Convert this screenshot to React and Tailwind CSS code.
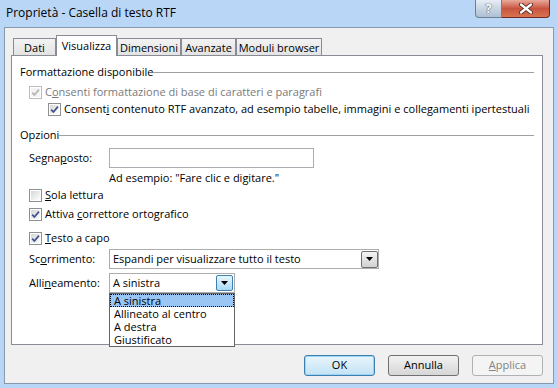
import React from "react";

function Check({ checked, disabled }) {
  return (
    <div
      className={
        disabled
          ? "w-[13px] h-[13px] border border-[#bcbcbc] bg-white p-px shrink-0"
          : "w-[13px] h-[13px] border border-[#8e8f8f] bg-white p-px shrink-0"
      }
    >
      <div
        className={
          disabled
            ? "w-full h-full bg-[#f4f4f4] flex items-center justify-center"
            : "w-full h-full bg-linear-to-br from-[#d6d6d6] to-[#ffffff] flex items-center justify-center"
        }
      >
        {checked && (
          <svg width="9" height="9" viewBox="0 0 9 9">
            <path
              d="M1.2 4.6 L3.4 7 L7.9 1.6"
              fill="none"
              stroke={disabled ? "#b5b5b5" : "#3f5190"}
              strokeWidth="1.7"
            />
          </svg>
        )}
      </div>
    </div>
  );
}

function Tri() {
  return (
    <svg width="7" height="4" viewBox="0 0 7 4">
      <path d="M0 0 H7 L3.5 4 Z" fill="#000" />
    </svg>
  );
}

function GroupHeader({ children, className }) {
  return (
    <div className={"h-[16px] flex items-center " + className}>
      <span className="leading-[16px]">{children}</span>
      <div className="flex-1 h-px bg-[#a0a0a0]" />
    </div>
  );
}

export default function App() {
  return (
    <div className="w-[557px] h-[388px] bg-[#bad6f6] overflow-hidden font-['Open_Sans',sans-serif] text-[11px] text-black">
      {/* Title bar */}
      <div className="h-[27px] flex items-start justify-between">
        <div className="pl-[6px] pt-[5px] text-[12px] leading-[16px] text-black">
          Proprietà - Casella di testo RTF
        </div>
        <div className="flex mr-[7px]">
          <div className="w-[27px] h-[18px] border border-t-0 border-[#6f7f94] rounded-bl-[4px] bg-linear-to-b from-[#e6edf5] via-[#c9d5e3] to-[#aebfd3] flex items-center justify-center">
            <span className="text-white font-bold text-[13px] leading-[13px] [text-shadow:0_0_1px_#34425a,0_0_1px_#34425a]">
              ?
            </span>
          </div>
          <div className="w-[48px] h-[18px] border border-t-0 border-l-0 border-[#6e2a22] rounded-br-[4px] bg-linear-to-b from-[#e9a99b] via-[#c75441] to-[#d9734f] flex items-center justify-center">
            <svg width="16" height="11" viewBox="0 0 16 11">
              <path
                d="M3 1.5 L13 9.5 M13 1.5 L3 9.5"
                stroke="#4a1b14"
                strokeWidth="4"
                strokeLinecap="round"
              />
              <path
                d="M3 1.5 L13 9.5 M13 1.5 L3 9.5"
                stroke="#ffffff"
                strokeWidth="2.4"
                strokeLinecap="round"
              />
            </svg>
          </div>
        </div>
      </div>

      {/* Client */}
      <div className="ml-[4px] w-[550px] h-[357px] border border-[#8799ad] bg-[#f0f0f0] flex flex-col">
        {/* Tabs */}
        <div className="pl-[8px] pt-[7px] flex items-end h-[27px]">
          <div className="w-[43px] h-[17px] border border-b-0 border-[#898c95] bg-linear-to-b from-[#f3f3f3] to-[#e3e3e3] flex items-center justify-center leading-[15px]">
            Dati
          </div>
          <div className="w-[61px] h-[21px] -mb-px relative z-10 border border-b-0 border-[#898c95] bg-white flex items-center justify-center leading-[15px] pb-[2px]">
            Visualizza
          </div>
          <div className="w-[64px] h-[17px] border border-b-0 border-[#898c95] bg-linear-to-b from-[#f3f3f3] to-[#e3e3e3] flex items-center justify-center leading-[15px]">
            Dimensioni
          </div>
          <div className="w-[55px] h-[17px] border border-b-0 border-[#898c95] bg-linear-to-b from-[#f3f3f3] to-[#e3e3e3] flex items-center justify-center leading-[15px]">
            Avanzate
          </div>
          <div className="w-[86px] h-[17px] border border-b-0 border-[#898c95] bg-linear-to-b from-[#f3f3f3] to-[#e3e3e3] flex items-center justify-center leading-[15px]">
            Moduli browser
          </div>
        </div>

        {/* Panel */}
        <div className="ml-[6px] w-[532px] h-[290px] border border-[#898c95] bg-white flex flex-col px-[8px]">
          <GroupHeader className="mt-[8px]">Formattazione disponibile</GroupHeader>

          <div className="mt-[4px] h-[16px] pl-[9px] flex items-center gap-[3px] text-[#7a7a7a]">
            <Check checked disabled />
            <span>
              C<u>o</u>nsenti formattazione di base di caratteri e paragrafi
            </span>
          </div>

          <div className="mt-[1px] h-[16px] pl-[28px] flex items-center gap-[3px]">
            <Check checked />
            <span className="whitespace-nowrap">
              Consent<u>i</u> contenuto RTF avanzato, ad esempio tabelle, immagini e collegamenti ipertestuali
            </span>
          </div>

          <GroupHeader className="mt-[10px]">Opzioni</GroupHeader>

          <div className="mt-[5px] h-[20px] flex items-center">
            <div className="w-[89px] pl-[9px]">
              Segna<u>p</u>osto:
            </div>
            <div className="w-[205px] h-[20px] border border-[#abadb3] bg-white" />
          </div>

          <div className="mt-[2px] h-[16px] pl-[89px] flex items-center">
            Ad esempio: "Fare clic e digitare."
          </div>

          <div className="mt-[1px] h-[16px] pl-[9px] flex items-center gap-[3px]">
            <Check />
            <span>
              <u>S</u>ola lettura
            </span>
          </div>

          <div className="mt-[3px] h-[16px] pl-[9px] flex items-center gap-[3px]">
            <Check checked />
            <span>
              Attiva <u>c</u>orrettore ortografico
            </span>
          </div>

          <div className="mt-[8px] h-[16px] pl-[9px] flex items-center gap-[3px]">
            <Check checked />
            <span>
              <u>T</u>esto a capo
            </span>
          </div>

          <div className="mt-[3px] h-[20px] flex items-center">
            <div className="w-[89px] pl-[9px]">
              Sc<u>o</u>rrimento:
            </div>
            <div className="w-[270px] h-[20px] border border-[#acacac] bg-white flex items-center">
              <span className="flex-1 pl-[3px] leading-[16px]">
                Espandi per visualizzare tutto il testo
              </span>
              <div className="w-[17px] h-[17px] border border-[#707070] rounded-[2px] bg-linear-to-b from-[#f4f4f4] to-[#d2d2d2] flex items-center justify-center">
                <Tri />
              </div>
            </div>
          </div>

          <div className="mt-[4px] h-[20px] flex items-center">
            <div className="w-[89px] pl-[9px]">
              Alli<u>n</u>eamento:
            </div>
            <div className="relative w-[126px] h-[20px] border border-[#acacac] bg-white flex items-center">
              <span className="flex-1 pl-[3px] leading-[16px]">A sinistra</span>
              <div className="w-[17px] h-[16px] mr-px border border-[#3c7fb1] rounded-[2px] bg-linear-to-b from-[#eaf6fd] to-[#a9daf5] flex items-center justify-center">
                <Tri />
              </div>

              {/* Dropdown list */}
              <div className="absolute left-[-1px] top-[19px] w-[126px] border border-[#646464] bg-white z-20 flex flex-col">
                <div className="h-[13px] leading-[11px] pl-[3px] bg-[#99c6f2] border border-dotted border-black overflow-hidden">
                  A sinistra
                </div>
                <div className="h-[13px] leading-[13px] pl-[4px] overflow-hidden">Allineato al centro</div>
                <div className="h-[13px] leading-[13px] pl-[4px] overflow-hidden">A destra</div>
                <div className="h-[13px] leading-[13px] pl-[4px] overflow-hidden">Giustificato</div>
              </div>
            </div>
          </div>
        </div>

        {/* Buttons */}
        <div className="mt-[10px] pr-[10px] flex justify-end gap-[13px]">
          <div className="w-[71px] h-[21px] rounded-[3px] border border-[#3c7fb1] bg-linear-to-b from-[#e9f5fc] to-[#c2e3f5] flex items-center justify-center shadow-[inset_0_0_0_1px_#9dd4f3]">
            OK
          </div>
          <div className="w-[71px] h-[21px] rounded-[3px] border border-[#707070] bg-linear-to-b from-[#f2f2f2] to-[#d6d6d6] flex items-center justify-center">
            Annulla
          </div>
          <div className="w-[71px] h-[21px] rounded-[3px] border border-[#adb2b5] bg-[#f4f4f4] flex items-center justify-center text-[#838383]">
            <span>
              <u>A</u>pplica
            </span>
          </div>
        </div>
      </div>
    </div>
  );
}
